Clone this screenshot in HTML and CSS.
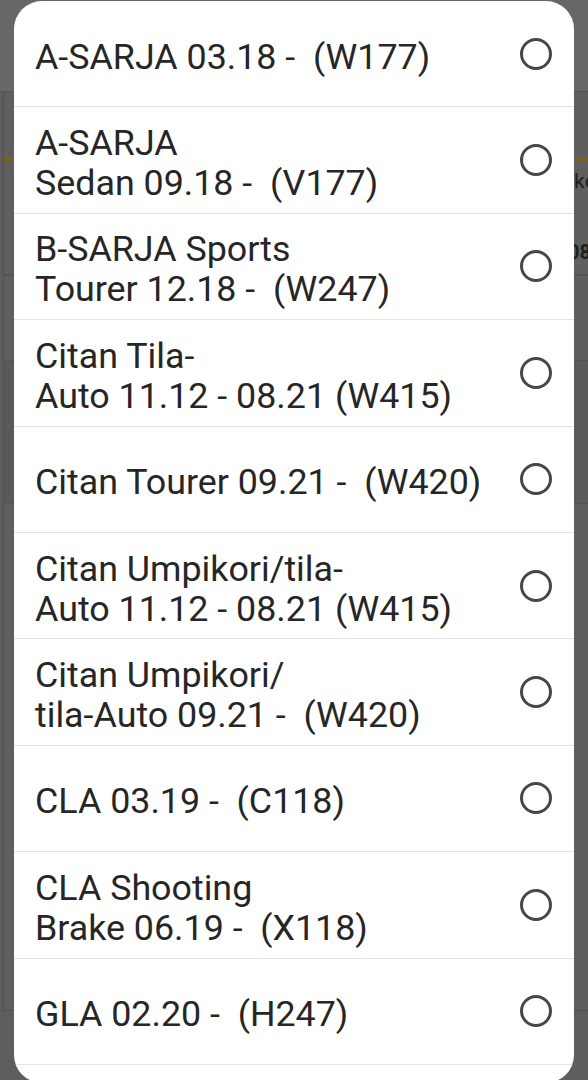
FILE: index.html
```html
<!DOCTYPE html>
<html lang="en">
<head>
    <meta charset="UTF-8">
    <meta name="viewport" content="width=device-width, initial-scale=1.0">
    <title>Valitse malli</title>
    <link rel="stylesheet" href="styles.css">
</head>
<body>

    <!-- dimmed page behind the dialog -->
    <div class="page">
        <div class="page-header"></div>
        <div class="page-body">
            <div class="page-card">
                <div class="card-top"></div>
                <div class="card-tab"><span class="tab-text">ko</span></div>
                <div class="card-row"><span class="row-text">08</span></div>
                <div class="card-gap"></div>
                <div class="card-shade"></div>
                <div class="card-rest"></div>
            </div>
        </div>
    </div>

    <div class="dialog">
        <div class="option">
            <span class="option-label">A-SARJA 03.18 -&nbsp; (W177)</span>
            <span class="radio"></span>
        </div>
        <div class="option">
            <span class="option-label">A-SARJA<br>Sedan 09.18 -&nbsp; (V177)</span>
            <span class="radio"></span>
        </div>
        <div class="option">
            <span class="option-label">B-SARJA Sports<br>Tourer 12.18 -&nbsp; (W247)</span>
            <span class="radio"></span>
        </div>
        <div class="option">
            <span class="option-label">Citan Tila-<br>Auto 11.12 - 08.21 (W415)</span>
            <span class="radio"></span>
        </div>
        <div class="option">
            <span class="option-label">Citan Tourer 09.21 -&nbsp; (W420)</span>
            <span class="radio"></span>
        </div>
        <div class="option">
            <span class="option-label">Citan Umpikori/tila-<br>Auto 11.12 - 08.21 (W415)</span>
            <span class="radio"></span>
        </div>
        <div class="option">
            <span class="option-label">Citan Umpikori/<br>tila-Auto 09.21 -&nbsp; (W420)</span>
            <span class="radio"></span>
        </div>
        <div class="option">
            <span class="option-label">CLA 03.19 -&nbsp; (C118)</span>
            <span class="radio"></span>
        </div>
        <div class="option">
            <span class="option-label">CLA Shooting<br>Brake 06.19 -&nbsp; (X118)</span>
            <span class="radio"></span>
        </div>
        <div class="option">
            <span class="option-label">GLA 02.20 -&nbsp; (H247)</span>
            <span class="radio"></span>
        </div>
    </div>

</body>
</html>
```

FILE: styles.css
```css
body {
    margin: 0;
    height: 1080px;
    overflow: hidden;
    background-color: #5e5e5e;
    font-family: Roboto, "Noto Sans", sans-serif;
}

.page {
    display: flex;
    flex-direction: column;
    height: 100%;
}
.page-header {
    height: 91px;
    background-color: #676767;
    border-bottom: 1px solid #555;
}
.page-body {
    flex: 1;
    padding: 0 0 70px 3px;
}
.page-card {
    height: 100%;
    border-left: 1px solid #515151;
    border-bottom: 1px solid #515151;
    background-color: #5f5f5f;
    display: flex;
    flex-direction: column;
}
.card-top {
    height: 66px;
}
.card-tab {
    border-top: 3px solid #7a6424;
    height: 47px;
    padding-left: 570px;
}
.tab-text {
    font-size: 21px;
    line-height: 40px;
    color: #1e1e1e;
}
.card-row {
    box-sizing: border-box;
    height: 68px;
    padding: 24px 0 0 564px;
    border-bottom: 2px solid #535353;
}
.row-text {
    font-size: 20px;
    line-height: 40px;
    font-weight: bold;
    color: #1e1e1e;
}
.card-gap {
    height: 84px;
    border-bottom: 1px solid #535353;
}
.card-shade {
    height: 142px;
    background-color: #5a5a5a;
    border-bottom: 1px solid #535353;
}
.card-rest {
    flex: 1;
}

/* the picker sits over the page */
.dialog {
    position: absolute;
    top: 1px;
    left: 14px;
    width: 560px;
    height: 1082px;
    background-color: #fff;
    border-radius: 28px;
    overflow: hidden;
}
.option {
    display: flex;
    align-items: center;
    justify-content: space-between;
    box-sizing: border-box;
    height: 106.4px;
    padding: 6px 22px 0 21px;
    border-bottom: 1px solid #e3e3e3;
}
.option-label {
    font-size: 35.8px;
    line-height: 40px;
    color: #262626;
}
.radio {
    flex: none;
    width: 32px;
    height: 32px;
    margin-top: -6px;
    box-sizing: border-box;
    border: 3px solid #474747;
    border-radius: 50%;
}
```
